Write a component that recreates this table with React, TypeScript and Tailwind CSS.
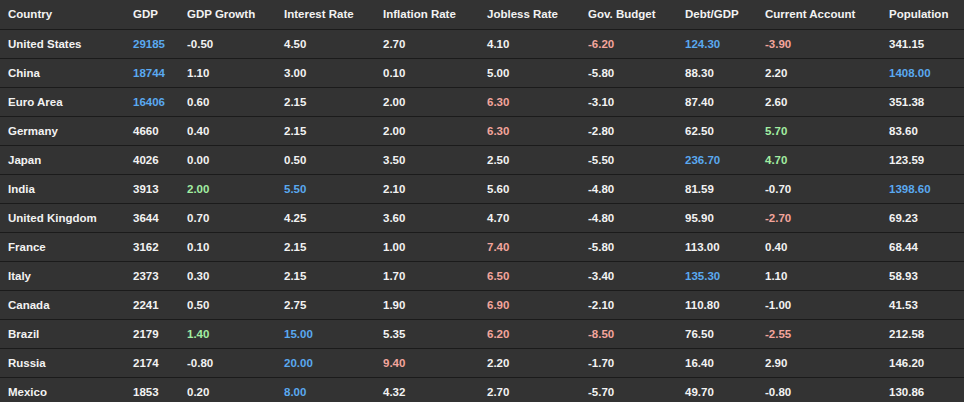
const headers = [
  "Country",
  "GDP",
  "GDP Growth",
  "Interest Rate",
  "Inflation Rate",
  "Jobless Rate",
  "Gov. Budget",
  "Debt/GDP",
  "Current Account",
  "Population",
];

// cell value, optional tone: b = blue, r = red, g = green
type Cell = string | [string, "b" | "r" | "g"];

const rows: Cell[][] = [
  ["United States", ["29185", "b"], "-0.50", "4.50", "2.70", "4.10", ["-6.20", "r"], ["124.30", "b"], ["-3.90", "r"], "341.15"],
  ["China", ["18744", "b"], "1.10", "3.00", "0.10", "5.00", "-5.80", "88.30", "2.20", ["1408.00", "b"]],
  ["Euro Area", ["16406", "b"], "0.60", "2.15", "2.00", ["6.30", "r"], "-3.10", "87.40", "2.60", "351.38"],
  ["Germany", "4660", "0.40", "2.15", "2.00", ["6.30", "r"], "-2.80", "62.50", ["5.70", "g"], "83.60"],
  ["Japan", "4026", "0.00", "0.50", "3.50", "2.50", "-5.50", ["236.70", "b"], ["4.70", "g"], "123.59"],
  ["India", "3913", ["2.00", "g"], ["5.50", "b"], "2.10", "5.60", "-4.80", "81.59", "-0.70", ["1398.60", "b"]],
  ["United Kingdom", "3644", "0.70", "4.25", "3.60", "4.70", "-4.80", "95.90", ["-2.70", "r"], "69.23"],
  ["France", "3162", "0.10", "2.15", "1.00", ["7.40", "r"], "-5.80", "113.00", "0.40", "68.44"],
  ["Italy", "2373", "0.30", "2.15", "1.70", ["6.50", "r"], "-3.40", ["135.30", "b"], "1.10", "58.93"],
  ["Canada", "2241", "0.50", "2.75", "1.90", ["6.90", "r"], "-2.10", "110.80", "-1.00", "41.53"],
  ["Brazil", "2179", ["1.40", "g"], ["15.00", "b"], "5.35", ["6.20", "r"], ["-8.50", "r"], "76.50", ["-2.55", "r"], "212.58"],
  ["Russia", "2174", "-0.80", ["20.00", "b"], ["9.40", "r"], "2.20", "-1.70", "16.40", "2.90", "146.20"],
  ["Mexico", "1853", "0.20", ["8.00", "b"], "4.32", "2.70", "-5.70", "49.70", "-0.80", "130.86"],
];

const tone = {
  b: "text-[#5aa9f0]",
  r: "text-[#f3a59c]",
  g: "text-[#a2eea2]",
};

const cols = "grid grid-cols-[125px_54px_97px_99px_104px_101px_97px_80px_124px_75px]";

export default function App() {
  return (
    <div className="h-[402px] w-[964px] overflow-hidden bg-[#333333] font-['Liberation_Sans',Arial,sans-serif] text-[11.5px] font-bold text-[#f2f2f2]">
      <div className={`${cols} h-[29px] items-center pt-px`}>
        {headers.map((h) => (
          <div key={h} className="whitespace-nowrap pl-2">
            {h}
          </div>
        ))}
      </div>
      {rows.map((row, i) => (
        <div key={i} className={`${cols} h-[29px] items-center border-t border-[#1b1b1b] pt-px`}>
          {row.map((c, j) => {
            const [text, t] = typeof c === "string" ? [c, undefined] : c;
            return (
              <div key={j} className={`whitespace-nowrap pl-2 ${t ? tone[t] : ""}`}>
                {text}
              </div>
            );
          })}
        </div>
      ))}
    </div>
  );
}
